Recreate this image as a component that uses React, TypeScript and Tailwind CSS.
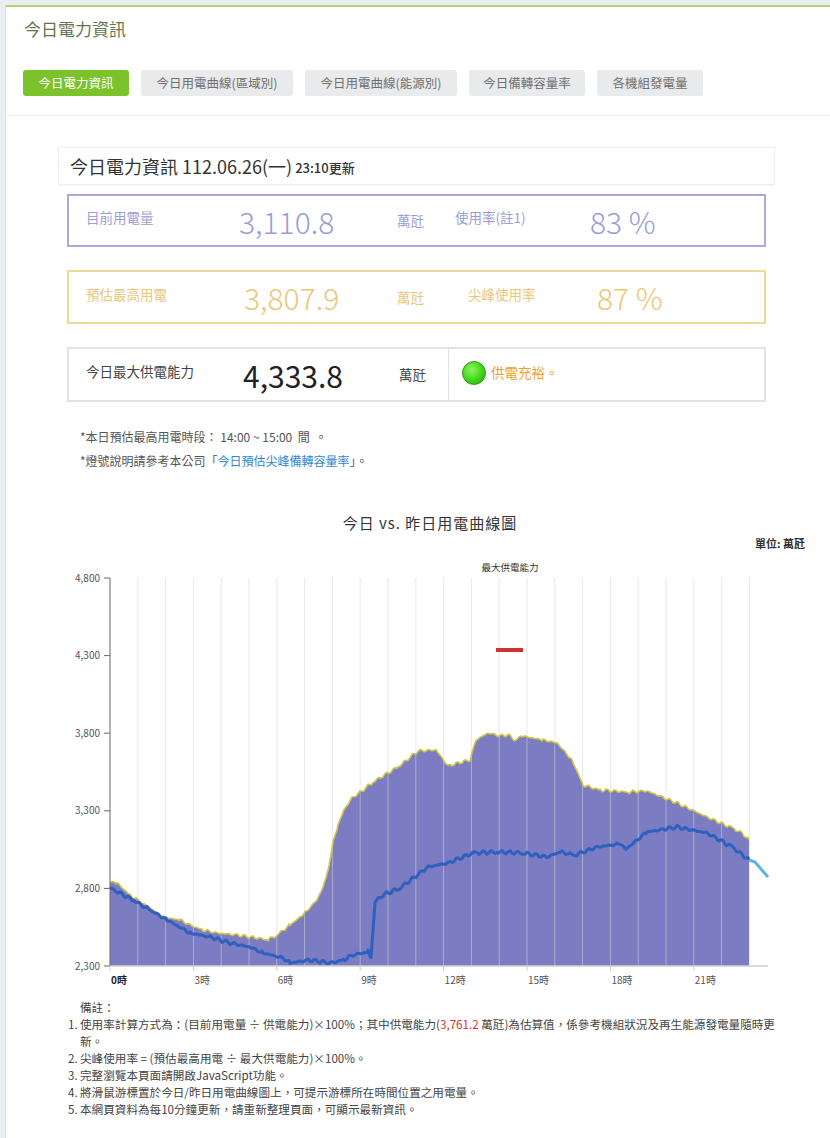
import React from 'react';

type Pt = [number, number];

// chart key points, in page pixels (the svg viewBox uses the same coords)
const areaPts: Pt[] = [
  [110, 882], [117, 883], [130, 895], [150, 908], [163, 917], [180, 920], [190, 925],
  [203, 930], [217, 933], [237, 935], [257, 938], [268, 940], [277, 935], [290, 925],
  [303, 915], [317, 900], [324, 885], [329, 865], [333, 843], [338, 825], [344, 810],
  [352, 798], [362, 791], [373, 782], [398, 767], [418, 751], [436, 750], [448, 766],
  [458, 763], [470, 760], [476, 740], [488, 733], [500, 736], [508, 735], [515, 740],
  [522, 736], [543, 740], [557, 743], [572, 760], [583, 785], [600, 790], [627, 792],
  [647, 791], [677, 803], [707, 817], [732, 828], [742, 833], [749, 840],
];

const linePts: Pt[] = [
  [110, 888], [133, 900], [150, 910], [167, 920], [190, 933], [210, 937], [230, 943],
  [250, 947], [263, 953], [283, 958], [290, 963], [310, 960], [330, 963], [343, 960],
  [353, 955], [368, 952], [371, 958], [375, 902], [383, 895], [400, 888], [428, 867],
  [448, 863], [473, 853], [498, 852], [523, 853], [547, 857], [560, 852], [575, 855],
  [597, 847], [620, 844], [626, 849], [647, 832], [677, 827], [707, 833], [732, 847],
  [749, 860],
];

const jitter = (x: number) => Math.sin(x * 2.3) * 0.9 + Math.sin(x * 0.71 + 1) * 0.8;

function trace(pts: Pt[], amp: number): string {
  const out: string[] = [];
  for (let i = 0; i < pts.length - 1; i++) {
    const [x0, y0] = pts[i];
    const [x1, y1] = pts[i + 1];
    for (let x = x0; x < x1; x += 2) {
      const t = (x - x0) / (x1 - x0);
      out.push(`${x.toFixed(1)},${(y0 + (y1 - y0) * t + jitter(x) * amp).toFixed(1)}`);
    }
  }
  const last = pts[pts.length - 1];
  out.push(`${last[0]},${last[1]}`);
  return out.join(' L');
}

const X0 = 110;
const HOUR = 27.8;
const yTicks = ['4,800', '4,300', '3,800', '3,300', '2,800', '2,300'];

const Chart: React.FC = () => {
  const top = trace(areaPts, 1);
  const line = trace(linePts, 1.1);
  return (
    <svg width="780" height="440" viewBox="50 555 780 440" className="mt-[4px] block">
      {/* area: today */}
      <path d={`M110,966 L${top} L749,966 Z`} fill="#7b7cc2" />
      {/* hour grid */}
      {Array.from({ length: 23 }, (_, i) => (
        <line key={i} x1={X0 + (i + 1) * HOUR} x2={X0 + (i + 1) * HOUR} y1="578" y2="966" stroke="#d6d6d6" strokeOpacity="0.55" strokeWidth="1" />
      ))}
      <path d={`M${top}`} fill="none" stroke="#cfc54a" strokeWidth="1.6" />
      <path d={`M${line}`} fill="none" stroke="#2f5fbf" strokeWidth="3" strokeLinejoin="round" />
      <path d="M749,860 L755,862 L761,869 L768,877" fill="none" stroke="#5ab6e0" strokeWidth="3" strokeLinejoin="round" />

      {/* max supply capability bar */}
      <rect x="496" y="648" width="27" height="4" fill="#cc3333" />
      <text x="510" y="571" textAnchor="middle" fontSize="9.5" fill="#333">最大供電能力</text>

      {/* axes */}
      <line x1="110" x2="110" y1="578" y2="966" stroke="#666" strokeWidth="1" />
      <line x1="110" x2="768" y1="966" y2="966" stroke="#cfcfcf" strokeWidth="1.5" />
      {yTicks.map((t, i) => {
        const y = 578 + i * 77.6;
        return (
          <g key={t}>
            <line x1="104" x2="110" y1={y} y2={y} stroke="#666" />
            <text x="100" y={y + 3.5} textAnchor="end" fontSize="10" fill="#555">{t}</text>
          </g>
        );
      })}
      {[0, 3, 6, 9, 12, 15, 18, 21].map((h) => (
        <g key={h}>
          <line x1={X0 + h * HOUR} x2={X0 + h * HOUR} y1="966" y2="971" stroke="#cfcfcf" />
          <text x={X0 + h * HOUR + 1} y="984" fontSize="10" fill={h === 0 ? '#222' : '#555'} fontWeight={h === 0 ? 700 : 400}>{h}時</text>
        </g>
      ))}
    </svg>
  );
};

const tabs = [
  { label: '今日電力資訊', w: 'w-[106px]', active: true },
  { label: '今日用電曲線(區域別)', w: 'w-[152px]' },
  { label: '今日用電曲線(能源別)', w: 'w-[152px]' },
  { label: '今日備轉容量率', w: 'w-[116px]' },
  { label: '各機組發電量', w: 'w-[106px]' },
];

const App: React.FC = () => {
  return (
    <div className="min-h-[1138px] bg-[#eaeef2] pt-[5px] pl-[5px] font-['Noto_Sans_CJK_TC','Noto_Sans',sans-serif] text-[#333]">
      <div className="min-h-[1133px] border-t-2 border-l border-t-[#b3d46a] border-l-[#dde3e8] bg-white">

        {/* Title */}
        <h1 className="pl-[18px] pt-[10px] text-[17px] leading-6 text-[#66754e]">今日電力資訊</h1>

        {/* Tabs */}
        <div className="mt-[29px] flex gap-3 pl-[17px]">
          {tabs.map((t) => (
            <div
              key={t.label}
              className={`${t.w} flex h-[26px] items-center justify-center rounded-[3px] text-[12.5px] ${
                t.active ? 'bg-[#7cc22b] text-white' : 'bg-[#e9eaeb] text-[#707070]'
              }`}
            >
              {t.label}
            </div>
          ))}
        </div>
        <div className="mt-[19px] border-b border-[#f0f0f0]" />

        {/* Info */}
        <div className="pl-[44px]">
          <div className="mt-[31px] ml-[8px] flex h-[38px] w-[717px] items-center border border-[#efefef] pl-[11px] shadow-[0_1px_2px_rgba(0,0,0,0.04)]">
            <span className="text-[18px]">今日電力資訊 112.06.26(一)</span>
            <span className="ml-[3px] mt-[3px] text-[13px] font-medium">23:10更新</span>
          </div>

          {/* current usage */}
          <div className="mt-[9px] ml-[17px] grid h-[53px] w-[699px] grid-cols-[153px_158px_58px_135px_1fr] items-center border-2 border-[#a9abdf] pl-[17px] text-[#9a9ed8]">
            <span className="-mt-[6px] text-[13.5px]">目前用電量</span>
            <span className="text-[30px] font-light leading-none">3,110.8</span>
            <span className="text-[13.5px]">萬瓩</span>
            <span className="-mt-[6px] text-[13.5px]">使用率(註1)</span>
            <span className="text-[30px] font-light leading-none">83 %</span>
          </div>

          {/* estimated peak */}
          <div className="mt-[23px] ml-[17px] grid h-[54px] w-[699px] grid-cols-[158px_153px_71px_129px_1fr] items-center border-2 border-[#f1d899] pl-[17px] text-[#ecc67a]">
            <span className="-mt-[6px] text-[13.5px]">預估最高用電</span>
            <span className="text-[30px] font-light leading-none">3,807.9</span>
            <span className="text-[13.5px]">萬瓩</span>
            <span className="-mt-[6px] text-[13.5px]">尖峰使用率</span>
            <span className="text-[30px] font-light leading-none">87 %</span>
          </div>

          {/* max supply */}
          <div className="mt-[23px] ml-[17px] flex h-[55px] w-[699px] items-stretch border-2 border-[#e2e2e2]">
            <div className="grid w-[380px] grid-cols-[157px_156px_1fr] items-center border-r border-[#e2e2e2] pl-[17px]">
              <span className="-mt-[6px] text-[13.5px] text-[#444]">今日最大供電能力</span>
              <span className="text-[30px] leading-none text-[#222]">4,333.8</span>
              <span className="text-[13.5px] text-[#444]">萬瓩</span>
            </div>
            <div className="flex items-center pl-[13px]">
              <span className="-mt-[4px] h-6 w-6 rounded-full border border-[#2a9a10] bg-[radial-gradient(circle_at_40%_35%,#8ff560,#3fd41a_55%,#22a80a)]" />
              <span className="-mt-[4px] ml-[5px] text-[13.5px] text-[#f0a030]">供電充裕。</span>
            </div>
          </div>

          {/* remarks */}
          <div className="mt-[23px] pl-[30px] text-[12px] leading-6 text-[#555]">
            <p>*本日預估最高用電時段： 14:00 ~ 15:00&nbsp;&nbsp;間&nbsp;&nbsp;。</p>
            <p>
              *燈號說明請參考本公司「<span className="text-[#2f86d1]">今日預估尖峰備轉容量率</span>」。
            </p>
          </div>

          {/* chart */}
          <div className="w-[760px]">
            <h2 className="mt-[40px] text-center text-[15px] leading-5 tracking-[1px] text-[#333]">今日 vs. 昨日用電曲線圖</h2>
            <div className="mt-[2px] pr-[5px] text-right text-[11px] font-bold leading-4 text-[#333]">單位: 萬瓩</div>
          </div>
        </div>

        <div className="pl-[44px]">
          <Chart />
        </div>

        {/* notes */}
        <div className="mt-[4px] pl-[62px] text-[11.6px] leading-[17px] text-[#444]">
          <p className="pl-[12px]">備註：</p>
          <ol className="w-[750px]">
            <li className="flex">
              <span className="w-[12px] shrink-0">1.</span>
              <span>
                使用率計算方式為：(目前用電量 ÷ 供電能力)×100%；其中供電能力(<span className="text-[#d0312d]">3,761.2</span> 萬瓩)為估算值，係參考機組狀況及再生能源發電量隨時更
                <br />
                新。
              </span>
            </li>
            <li className="flex">
              <span className="w-[12px] shrink-0">2.</span>
              <span>尖峰使用率 = (預估最高用電 ÷ 最大供電能力)×100%。</span>
            </li>
            <li className="flex">
              <span className="w-[12px] shrink-0">3.</span>
              <span>完整瀏覽本頁面請開啟JavaScript功能。</span>
            </li>
            <li className="flex">
              <span className="w-[12px] shrink-0">4.</span>
              <span>將滑鼠游標置於今日/昨日用電曲線圖上，可提示游標所在時間位置之用電量。</span>
            </li>
            <li className="flex">
              <span className="w-[12px] shrink-0">5.</span>
              <span>本網頁資料為每10分鐘更新，請重新整理頁面，可顯示最新資訊。</span>
            </li>
          </ol>
        </div>
      </div>
    </div>
  );
};

export default App;
